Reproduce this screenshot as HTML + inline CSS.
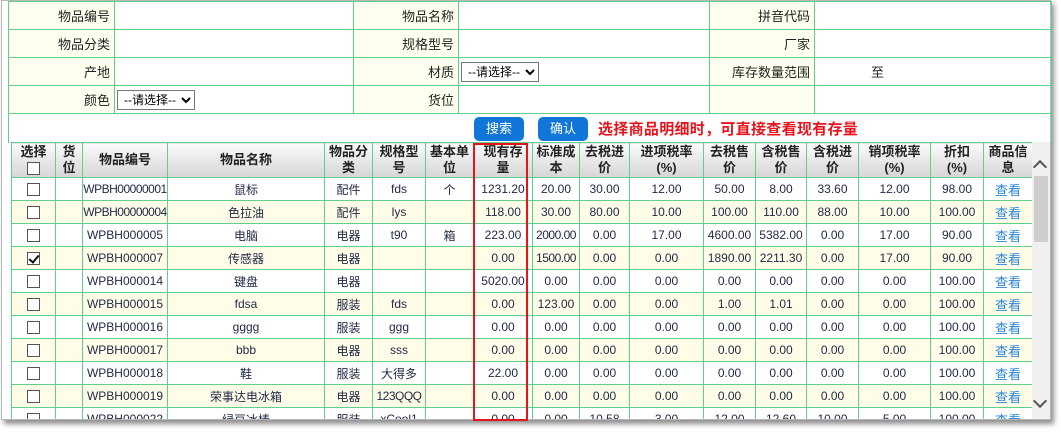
<!DOCTYPE html>
<html><head><meta charset="utf-8">
<style>
*{box-sizing:border-box;margin:0;padding:0}
body{width:1061px;height:432px;background:#fff;position:relative;overflow:hidden;font-family:"Liberation Sans","Noto Sans CJK SC",sans-serif;font-size:13px;color:#222}
#frame{position:absolute;left:1px;top:0;width:1050px;height:420px;border:1px solid #b8b8b8;background:#fff;box-shadow:3px 4px 5px rgba(0,0,0,.45);overflow:hidden}
table{border-collapse:collapse;table-layout:fixed}
#form{position:absolute;left:8px;top:1px;width:1043px}
#form td{border:1px solid #5fcf8c;height:28px;padding:0 4px}
#form td.l{background:#fffff0;text-align:right}
select{height:20px;font-size:12px;font-family:inherit;border:1px solid #777;background:#fff;padding:0 2px}
.btn{position:absolute;top:117px;height:24px;background:#1176d9;color:#fff;border-radius:5px;text-align:center;line-height:24px;font-size:13px}
#tip{position:absolute;left:598px;top:118px;color:#e8141b;font-weight:bold;font-size:15px;letter-spacing:0.3px}
#grid{position:absolute;left:11px;top:142px;width:1021px;height:277px;overflow:hidden}
#grid table{width:1021px}
#grid td{border:1px solid #5fcf8c;height:23px;text-align:center;padding:0;white-space:nowrap;overflow:hidden;color:#1f2747;font-size:12px}
#grid td.n{letter-spacing:-0.5px}
#grid tr.h td{height:35px;background:linear-gradient(#fafafa,#d6d6d6);font-weight:bold;color:#222;line-height:16px;white-space:normal;font-size:13px}
#grid tr:nth-child(odd):not(.h) td{background:#fffde7}
.cb{display:inline-block;width:13px;height:13px;border:1px solid #555;background:#fff;vertical-align:middle;position:relative}
.ck::after{content:"";position:absolute;left:3px;top:0px;width:4px;height:8px;border:solid #111;border-width:0 2px 2px 0;transform:rotate(40deg)}
#grid td.v{color:#2a86d6;font-size:13px}
#red{position:absolute;left:473px;top:143px;width:55px;height:278px;border:2px solid #e3161d}
#sb{position:absolute;left:1032px;top:142px;width:18px;height:277px;background:#f0f0f0}
#thumb{position:absolute;left:1034px;top:176px;width:14px;height:66px;background:#cdcdcd}
.ar{position:absolute;left:1035px;width:10px;height:10px;border:solid #555;border-width:2px 0 0 2px}
</style></head><body>
<div id="frame"></div>
<table id="form">
<colgroup><col style="width:106px"><col style="width:239px"><col style="width:105px"><col style="width:251px"><col style="width:105px"><col style="width:237px"></colgroup>
<tr><td class="l">物品编号</td><td></td><td class="l">物品名称</td><td></td><td class="l">拼音代码</td><td></td></tr>
<tr><td class="l">物品分类</td><td></td><td class="l">规格型号</td><td></td><td class="l">厂家</td><td></td></tr>
<tr><td class="l">产地</td><td></td><td class="l">材质</td><td style="padding-left:2px"><select><option>--请选择--</option></select></td><td class="l">库存数量范围</td><td style="padding-left:56px">至</td></tr>
<tr><td class="l">颜色</td><td style="padding-left:2px"><select><option>--请选择--</option></select></td><td class="l">货位</td><td></td><td class="l"></td><td></td></tr>
<tr><td colspan="6" style="height:29px;border-bottom:none"></td></tr>
</table>
<div class="btn" style="left:474px;width:50px">搜索</div>
<div class="btn" style="left:538px;width:50px">确认</div>
<div id="tip">选择商品明细时，可直接查看现有存量</div>
<div id="grid"><table>
<colgroup><col style="width:44px"><col style="width:27px"><col style="width:85px"><col style="width:157px"><col style="width:48px"><col style="width:53px"><col style="width:48px"><col style="width:59px"><col style="width:47px"><col style="width:50px"><col style="width:74px"><col style="width:52px"><col style="width:51px"><col style="width:52px"><col style="width:72px"><col style="width:53px"><col style="width:49px"></colgroup>
<tr class="h"><td>选择<br><span class="cb"></span></td><td>货<br>位</td><td>物品编号</td><td>物品名称</td><td>物品分<br>类</td><td>规格型<br>号</td><td>基本单<br>位</td><td>现有存<br>量</td><td>标准成<br>本</td><td>去税进<br>价</td><td>进项税率<br>(%)</td><td>去税售<br>价</td><td>含税售<br>价</td><td>含税进<br>价</td><td>销项税率<br>(%)</td><td>折扣<br>(%)</td><td>商品信<br>息</td></tr>
<tr><td><span class="cb"></span></td><td></td><td class="n">WPBH00000001</td><td>鼠标</td><td>配件</td><td>fds</td><td>个</td><td>1231.20</td><td>20.00</td><td>30.00</td><td>12.00</td><td>50.00</td><td>8.00</td><td>33.60</td><td>12.00</td><td>98.00</td><td class="v">查看</td></tr>
<tr><td><span class="cb"></span></td><td></td><td class="n">WPBH00000004</td><td>色拉油</td><td>配件</td><td>lys</td><td></td><td>118.00</td><td>30.00</td><td>80.00</td><td>10.00</td><td>100.00</td><td>110.00</td><td>88.00</td><td>10.00</td><td>100.00</td><td class="v">查看</td></tr>
<tr><td><span class="cb"></span></td><td></td><td>WPBH000005</td><td>电脑</td><td>电器</td><td>t90</td><td>箱</td><td>223.00</td><td class="n">2000.00</td><td>0.00</td><td>17.00</td><td>4600.00</td><td>5382.00</td><td>0.00</td><td>17.00</td><td>90.00</td><td class="v">查看</td></tr>
<tr><td><span class="cb ck"></span></td><td></td><td>WPBH000007</td><td>传感器</td><td>电器</td><td></td><td></td><td>0.00</td><td class="n">1500.00</td><td>0.00</td><td>0.00</td><td>1890.00</td><td>2211.30</td><td>0.00</td><td>17.00</td><td>90.00</td><td class="v">查看</td></tr>
<tr><td><span class="cb"></span></td><td></td><td>WPBH000014</td><td>键盘</td><td>电器</td><td></td><td></td><td>5020.00</td><td>0.00</td><td>0.00</td><td>0.00</td><td>0.00</td><td>0.00</td><td>0.00</td><td>0.00</td><td>100.00</td><td class="v">查看</td></tr>
<tr><td><span class="cb"></span></td><td></td><td>WPBH000015</td><td>fdsa</td><td>服装</td><td>fds</td><td></td><td>0.00</td><td>123.00</td><td>0.00</td><td>0.00</td><td>1.00</td><td>1.01</td><td>0.00</td><td>0.00</td><td>100.00</td><td class="v">查看</td></tr>
<tr><td><span class="cb"></span></td><td></td><td>WPBH000016</td><td>gggg</td><td>服装</td><td>ggg</td><td></td><td>0.00</td><td>0.00</td><td>0.00</td><td>0.00</td><td>0.00</td><td>0.00</td><td>0.00</td><td>0.00</td><td>100.00</td><td class="v">查看</td></tr>
<tr><td><span class="cb"></span></td><td></td><td>WPBH000017</td><td>bbb</td><td>电器</td><td>sss</td><td></td><td>0.00</td><td>0.00</td><td>0.00</td><td>0.00</td><td>0.00</td><td>0.00</td><td>0.00</td><td>0.00</td><td>100.00</td><td class="v">查看</td></tr>
<tr><td><span class="cb"></span></td><td></td><td>WPBH000018</td><td>鞋</td><td>服装</td><td>大得多</td><td></td><td>22.00</td><td>0.00</td><td>0.00</td><td>0.00</td><td>0.00</td><td>0.00</td><td>0.00</td><td>0.00</td><td>100.00</td><td class="v">查看</td></tr>
<tr><td><span class="cb"></span></td><td></td><td>WPBH000019</td><td>荣事达电冰箱</td><td>电器</td><td class="n">123QQQ</td><td></td><td>0.00</td><td>0.00</td><td>0.00</td><td>0.00</td><td>0.00</td><td>0.00</td><td>0.00</td><td>0.00</td><td>100.00</td><td class="v">查看</td></tr>
<tr><td><span class="cb"></span></td><td></td><td>WPBH000022</td><td>绿豆冰棒</td><td>服装</td><td>xCool1</td><td></td><td>0.00</td><td>0.00</td><td>10.58</td><td>3.00</td><td>12.00</td><td>12.60</td><td>10.00</td><td>5.00</td><td>100.00</td><td class="v">查看</td></tr>
</table></div>
<div id="sb"></div><div id="thumb"></div>
<div class="ar" style="top:162px;transform:rotate(45deg)"></div>
<div class="ar" style="top:396px;transform:rotate(225deg)"></div>
<div id="red"></div>
</body></html>
